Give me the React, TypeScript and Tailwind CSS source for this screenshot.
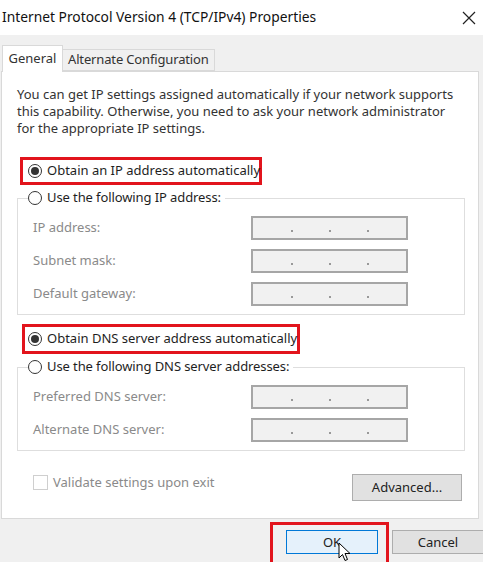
import React from 'react';

const FONT = '"Noto Sans", "Open Sans", Arial, sans-serif';

function Radio({ checked }: { checked?: boolean }) {
  return (
    <span className="w-[14px] h-[14px] rounded-full border border-[#333] bg-white flex items-center justify-center shrink-0">
      {checked && <span className="w-[8px] h-[8px] rounded-full bg-[#333]" />}
    </span>
  );
}

function IpBox() {
  return (
    <div className="w-[157px] h-[24px] border-2 border-[#a6a6a6] bg-[#f1f1f1] flex items-end justify-center gap-[36px] pb-[6px]">
      <span className="w-[2px] h-[2px] bg-[#999]" />
      <span className="w-[2px] h-[2px] bg-[#999]" />
      <span className="w-[2px] h-[2px] bg-[#999]" />
    </div>
  );
}

function FieldRow({ label }: { label: string }) {
  return (
    <div className="flex items-center">
      <span className="w-[218px] text-[#8a8a8a] whitespace-nowrap">{label}</span>
      <IpBox />
    </div>
  );
}

function Group({ legend, rows }: { legend: string; rows: string[] }) {
  return (
    <fieldset className="border border-[#dedede] pl-[15px] pb-[8px] min-w-0">
      <legend className="ml-[-5px] pr-[4px] flex items-center gap-[5px] h-[18px] whitespace-nowrap">
        <Radio />
        <span className="tracking-[-0.1px]">{legend}</span>
      </legend>
      <div className="flex flex-col gap-[9px] mt-[9px]">
        {rows.map((r) => (
          <FieldRow key={r} label={r} />
        ))}
      </div>
    </fieldset>
  );
}

function RedBox({ children, className }: { children: React.ReactNode; className?: string }) {
  return <div className={`border-[3px] border-[#e2141c] ${className ?? ''}`}>{children}</div>;
}

export default function App() {
  return (
    <div
      className="w-[483px] h-[562px] bg-[#f0f0f0] text-[13px] text-[#1e1e1e] overflow-hidden relative"
      style={{ fontFamily: FONT }}
    >
      {/* title bar */}
      <div className="h-[35px] bg-white flex items-center justify-between pl-[2px] pr-[6px]">
        <span className="text-[13.8px] text-[#111] whitespace-nowrap">
          Internet Protocol Version 4 (TCP/IPv4) Properties
        </span>
        <svg width="14" height="14" viewBox="0 0 14 14" className="mr-[1px]">
          <path d="M1 1 L13 13 M13 1 L1 13" stroke="#222" strokeWidth="1.2" />
        </svg>
      </div>

      {/* tabs */}
      <div className="flex items-end h-[36px] pl-[2px]">
        <div className="h-[27px] w-[61px] bg-white border border-b-0 border-[#d9d9d9] flex items-center justify-center text-[#333] relative top-[1px] z-10">
          General
        </div>
        <div className="h-[22px] px-[5px] bg-[#f0f0f0] border border-l-0 border-[#d9d9d9] flex items-center text-[#333] whitespace-nowrap tracking-[-0.15px]">
          Alternate Configuration
        </div>
      </div>

      {/* panel */}
      <div className="mx-[1px] w-[478px] h-[448px] bg-white border border-[#d9d9d9] pl-[15px] pr-[13px] flex flex-col">
        <p className="mt-[14px] leading-[17px] text-[#333] whitespace-nowrap">
          You can get IP settings assigned automatically if your network supports
          <br />
          this capability. Otherwise, you need to ask your network administrator
          <br />
          for the appropriate IP settings.
        </p>

        <RedBox className="self-start ml-[3px] mt-[20px] w-[242px] h-[28px] flex items-center pl-[5px]">
          <span className="flex items-center gap-[5px] whitespace-nowrap">
            <Radio checked />
            <span>Obtain an IP address automatically</span>
          </span>
        </RedBox>

        <div className="mt-[4px]">
          <Group legend="Use the following IP address:" rows={['IP address:', 'Subnet mask:', 'Default gateway:']} />
        </div>

        <RedBox className="self-start ml-[5px] mt-[9px] w-[278px] h-[30px] flex items-center pl-[3px]">
          <span className="flex items-center gap-[5px] whitespace-nowrap">
            <Radio checked />
            <span>Obtain DNS server address automatically</span>
          </span>
        </RedBox>

        <div className="mt-[4px]">
          <Group legend="Use the following DNS server addresses:" rows={['Preferred DNS server:', 'Alternate DNS server:']} />
        </div>

        <div className="flex items-start justify-between mt-[23px] pl-[16px] pr-[3px]">
          <div className="flex items-center gap-[5px] text-[#8a8a8a] mt-[-1px]">
            <span className="w-[15px] h-[15px] border border-[#cfcfcf] bg-white" />
            <span className="whitespace-nowrap">Validate settings upon exit</span>
          </div>
          <button className="w-[110px] h-[27px] bg-[#e1e1e1] border border-[#adadad] text-[#222]">
            Advanced...
          </button>
        </div>
      </div>

      {/* bottom buttons */}
      <div className="flex items-start pl-[270px] pt-[3px]">
        <RedBox className="w-[119px] h-[45px] pl-[13px] pt-[5px] shrink-0">
          <button className="w-[92px] h-[24px] bg-[#e5f1fb] border border-[#0078d7] text-[#222] leading-none">
            OK
          </button>
        </RedBox>
        <button className="ml-[3px] mt-[8px] w-[92px] h-[24px] bg-[#e1e1e1] border border-[#adadad] text-[#222] leading-none shrink-0">
          Cancel
        </button>
      </div>

      {/* mouse pointer */}
      <svg className="absolute left-[338px] top-[542px]" width="14" height="20" viewBox="0 0 14 20">
        <path d="M1 1 L1 16 L4.5 12.5 L7 18.5 L9.5 17.5 L7 11.5 L12 11.5 Z" fill="#fff" stroke="#000" strokeWidth="1" strokeLinejoin="round" />
      </svg>
    </div>
  );
}
